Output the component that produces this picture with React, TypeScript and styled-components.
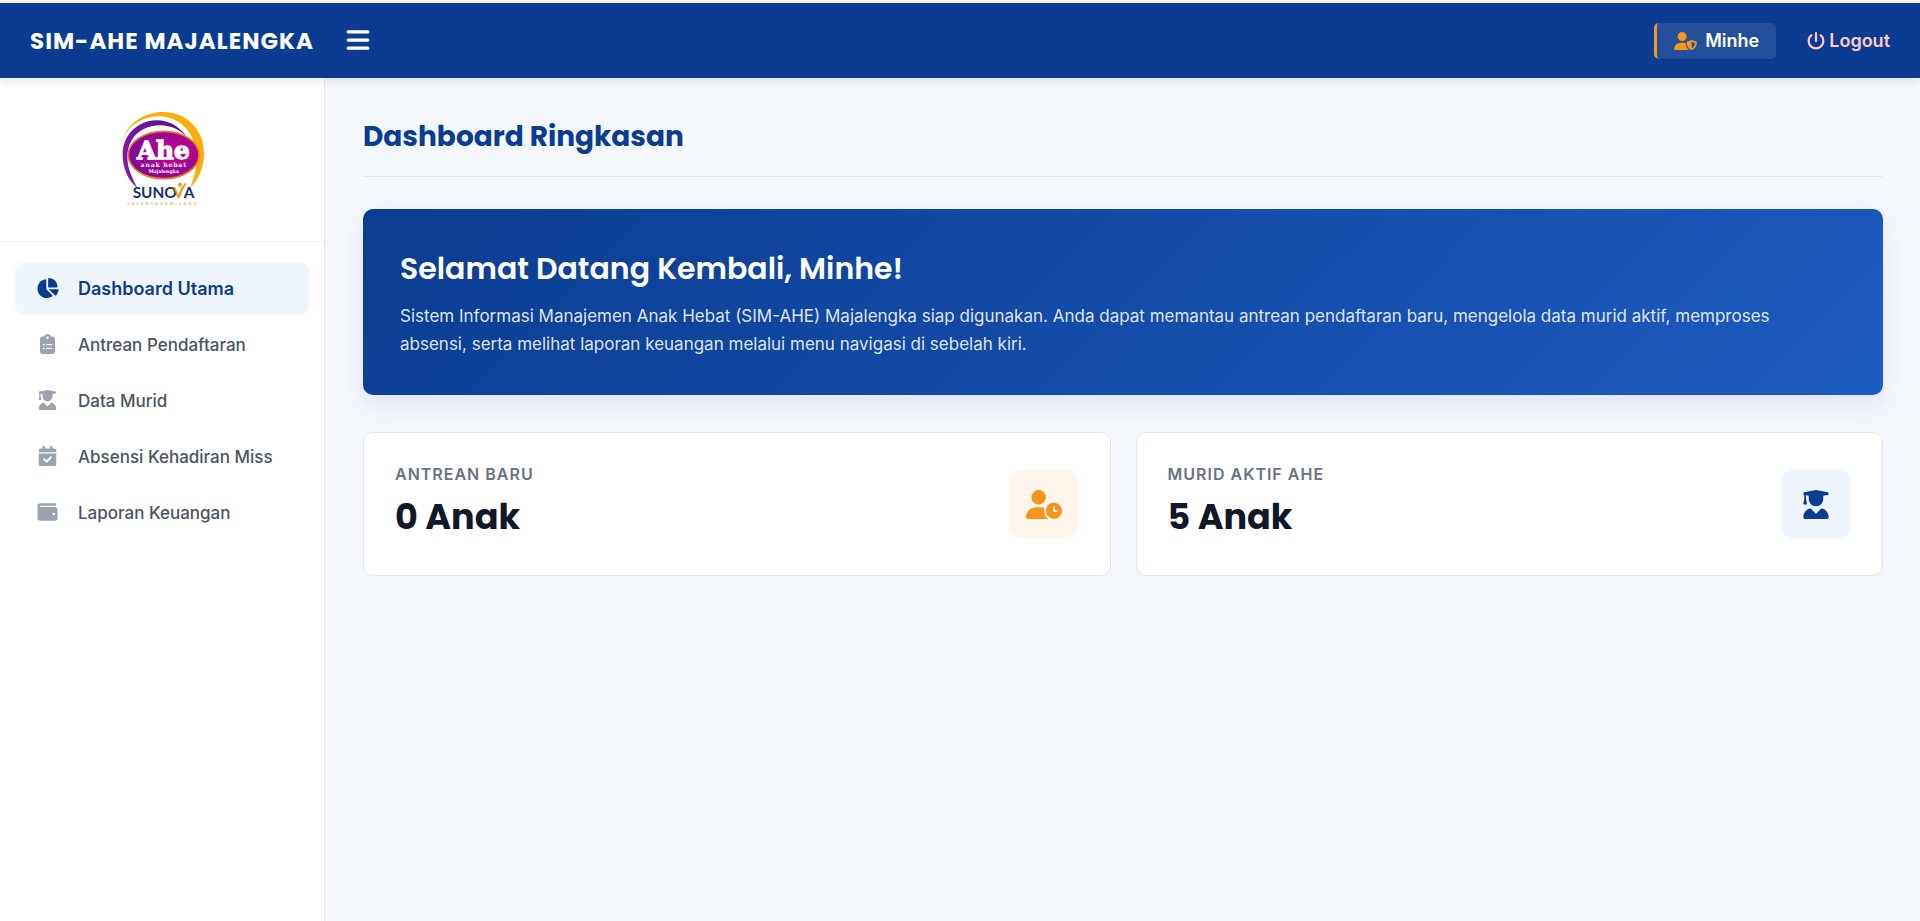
import React from 'react';
import styled, { createGlobalStyle } from 'styled-components';
import {
  FaBars, FaCalendarCheck, FaChartPie, FaClipboardList, FaPowerOff,
  FaUserClock, FaUserGraduate, FaUserShield, FaWallet,
} from 'react-icons/fa6';

const heading = "Poppins, Inter, 'Open Sans', sans-serif";
const blue = '#0b3c91';
const orange = '#f7941d';

const GlobalStyle = createGlobalStyle`
  *, *::before, *::after { box-sizing: border-box; }
  body {
    margin: 0;
    background: #f4f7fc;
    color: #111827;
    font-family: Inter, 'Liberation Sans', sans-serif;
    font-size: 17px;
  }
  h1, h2, p, ul { margin: 0; padding: 0; }
  a { text-decoration: none; }
`;

const Page = styled.div`
  display: flex;
  flex-direction: column;
  min-height: 100vh;
`;

const TopBar = styled.header`
  display: flex;
  align-items: center;
  justify-content: space-between;
  height: 78px;
  padding: 0 30px;
  border-top: 3px solid #fdf1f4;
  background: ${blue};
  box-shadow: 0 4px 8px rgba(0, 0, 0, 0.08);
  z-index: 1;
`;

const BarGroup = styled.div`
  display: flex;
  align-items: center;
  gap: 31px;
`;

const Brand = styled.div`
  color: #fff;
  font-family: ${heading};
  font-size: 23px;
  font-weight: 700;
  letter-spacing: 1px;
  white-space: nowrap;
`;

const MenuButton = styled.button`
  display: flex;
  padding: 0 0 2px;
  border: 0;
  background: none;
  color: #fff;
  font-size: 26px;
  cursor: pointer;
`;

const UserBadge = styled.div`
  display: flex;
  align-items: center;
  gap: 8px;
  height: 36px;
  padding: 0 17px;
  border-left: 3px solid ${orange};
  border-radius: 5px;
  background: rgba(255, 255, 255, 0.1);
  color: #fff;
  font-size: 18px;
  font-weight: 600;
  svg { color: ${orange}; width: 23px; height: 18px; }
`;

const Logout = styled.a`
  display: flex;
  align-items: center;
  gap: 4px;
  color: #fecaca;
  font-size: 18px;
  font-weight: 600;
`;

const Body = styled.div`
  display: flex;
  flex: 1;
`;

const Sidebar = styled.aside`
  flex: none;
  width: 325px;
  border-right: 1px solid #e5e7eb;
  background: #fff;
`;

const LogoArea = styled.div`
  display: flex;
  justify-content: center;
  padding: 30px 0 33px;
  border-bottom: 1px solid #f3f4f6;
`;

const Menu = styled.ul`
  display: flex;
  flex-direction: column;
  gap: 5px;
  padding: 21px 15px;
  list-style: none;
`;

const MenuLink = styled.a<{ $active?: boolean }>`
  display: flex;
  align-items: center;
  gap: 18px;
  height: 51px;
  padding: 0 20px;
  border-radius: 8px;
  background: ${({ $active }) => ($active ? '#eff6ff' : 'transparent')};
  color: ${({ $active }) => ($active ? blue : '#4b5563')};
  font-size: ${({ $active }) => ($active ? 18 : 17)}px;
  font-weight: ${({ $active }) => ($active ? 600 : 500)};
  white-space: nowrap;
  svg { color: ${({ $active }) => ($active ? blue : '#9ca3af')}; }
`;

const MenuIcon = styled.span`
  display: flex;
  justify-content: center;
  width: 25px;
  padding-bottom: 2px;
  svg { width: 25px; height: 20px; }
`;

const Main = styled.main`
  flex: 1;
  min-width: 0;
  padding: 37px 37px 37px 38px;
`;

const Title = styled.h1`
  padding-bottom: 17px;
  border-bottom: 1px solid #e5e7eb;
  color: ${blue};
  font-family: ${heading};
  font-size: 28px;
  font-weight: 700;
  line-height: 44px;
`;

const Banner = styled.section`
  margin-top: 32px;
  padding: 37px 74px 37px 37px;
  border-radius: 10px;
  background: linear-gradient(135deg, ${blue}, #1e5bc0);
  box-shadow: 0 10px 26px rgba(30, 64, 175, 0.1);
  color: #fff;
  h2 {
    margin-bottom: 10px;
    font-family: ${heading};
    font-size: 30px;
    font-weight: 600;
    line-height: 46px;
  }
  p { color: rgba(255, 255, 255, 0.87); line-height: 28px; }
`;

const Cards = styled.div`
  display: grid;
  grid-template-columns: 1fr 1fr;
  gap: 25px;
  margin-top: 37px;
`;

const Card = styled.section`
  display: flex;
  align-items: center;
  justify-content: space-between;
  height: 144px;
  padding: 0 32px 0 31px;
  border: 1px solid #e5e7eb;
  border-radius: 10px;
  background: #fff;
  box-shadow: 0 1px 3px rgba(0, 0, 0, 0.02);
`;

const CardLabel = styled.h2`
  color: #6b7280;
  font-size: 16px;
  font-weight: 600;
  letter-spacing: 1px;
  line-height: 26px;
`;

const CardValue = styled.p`
  font-family: ${heading};
  font-size: 35px;
  font-weight: 700;
  line-height: 60px;
`;

const CardIcon = styled.div<{ $tint: string; $color: string }>`
  display: grid;
  place-items: center;
  width: 68px;
  height: 68px;
  border-radius: 10px;
  background: ${({ $tint }) => $tint};
  color: ${({ $color }) => $color};
  svg { width: 36px; height: 29px; }
`;

const LogoSvg = styled.svg`
  display: block;
  width: 90px;
  height: 100px;
`;

function Logo() {
  return (
    <LogoSvg viewBox="-3 0 270 300" role="img" aria-label="Ahe Sunova">
      <defs>
        <radialGradient id="disc" cx="0.65" cy="0.45" r="0.65">
          <stop offset="0" stopColor="#d1008c" />
          <stop offset="1" stopColor="#7a0a9c" />
        </radialGradient>
        <linearGradient id="swoosh" x1="0" y1="1" x2="1" y2="0">
          <stop offset="0" stopColor="#8a1fae" />
          <stop offset="1" stopColor="#5d0b94" />
        </linearGradient>
      </defs>
      <path d="M14 92 C35 40 85 12 135 12 C205 12 258 65 258 135 C258 178 242 215 216 240 C230 205 238 175 235 140 C230 75 190 28 125 25 C80 24 35 48 14 92 Z" fill="#fbae09" />
      <path d="M205 85 C185 55 150 36 115 37 C55 38 14 85 14 140 C14 180 30 217 58 240 C40 205 28 180 28 145 C30 85 75 52 125 52 C160 53 185 65 205 85 Z" fill="url(#swoosh)" />
      <ellipse cx="137" cy="141" rx="106" ry="71" fill="url(#disc)" stroke="#ee7623" strokeWidth="5" />
      <g fill="#fff" textAnchor="middle" fontFamily="'DejaVu Serif', serif" fontWeight="700">
        <text x="136" y="153" fontSize="74" stroke="#fff" strokeWidth="4">Ahe</text>
        <text x="137" y="178" fontSize="19" letterSpacing="2">anak hebat</text>
        <text x="137" y="196" fontSize="14">Majalengka</text>
      </g>
      <g fontFamily="Lato, sans-serif" fontWeight="700" fontSize="46" fill="#17336f">
        <text x="44" y="270">SUNO</text>
        <text x="166" y="270" fill={orange}>V</text>
        <text x="197" y="270">A</text>
      </g>
      <path d="M184 266 Q190 240 204 226" fill="none" stroke={orange} strokeWidth="5" />
      <circle cx="186" cy="230" r="6" fill={orange} />
      <text x="28" y="290" fontFamily="Lato, sans-serif" fontWeight="700" fontSize="10" letterSpacing="8" fill="#f2a65a">TALENTAGEMILANG</text>
    </LogoSvg>
  );
}

const menu = [
  { label: 'Dashboard Utama', icon: FaChartPie, active: true },
  { label: 'Antrean Pendaftaran', icon: FaClipboardList },
  { label: 'Data Murid', icon: FaUserGraduate },
  { label: 'Absensi Kehadiran Miss', icon: FaCalendarCheck },
  { label: 'Laporan Keuangan', icon: FaWallet },
];

export default function App() {
  return (
    <Page>
      <GlobalStyle />
      <TopBar>
        <BarGroup>
          <Brand>SIM-AHE MAJALENGKA</Brand>
          <MenuButton aria-label="Menu"><FaBars /></MenuButton>
        </BarGroup>
        <BarGroup>
          <UserBadge><FaUserShield />Minhe</UserBadge>
          <Logout href="#logout"><FaPowerOff />Logout</Logout>
        </BarGroup>
      </TopBar>
      <Body>
        <Sidebar>
          <LogoArea><Logo /></LogoArea>
          <nav>
            <Menu>
              {menu.map(({ label, icon: Icon, active }) => (
                <li key={label}>
                  <MenuLink href="#" $active={active}>
                    <MenuIcon><Icon /></MenuIcon>
                    {label}
                  </MenuLink>
                </li>
              ))}
            </Menu>
          </nav>
        </Sidebar>
        <Main>
          <Title>Dashboard Ringkasan</Title>
          <Banner>
            <h2>Selamat Datang Kembali, Minhe!</h2>
            <p>
              Sistem Informasi Manajemen Anak Hebat (SIM-AHE) Majalengka siap digunakan. Anda dapat memantau
              antrean pendaftaran baru, mengelola data murid aktif, memproses absensi, serta melihat laporan
              keuangan melalui menu navigasi di sebelah kiri.
            </p>
          </Banner>
          <Cards>
            <Card>
              <div>
                <CardLabel>ANTREAN BARU</CardLabel>
                <CardValue>0 Anak</CardValue>
              </div>
              <CardIcon $tint="#fff5eb" $color={orange}><FaUserClock /></CardIcon>
            </Card>
            <Card>
              <div>
                <CardLabel>MURID AKTIF AHE</CardLabel>
                <CardValue>5 Anak</CardValue>
              </div>
              <CardIcon $tint="#eff6ff" $color={blue}><FaUserGraduate /></CardIcon>
            </Card>
          </Cards>
        </Main>
      </Body>
    </Page>
  );
}
